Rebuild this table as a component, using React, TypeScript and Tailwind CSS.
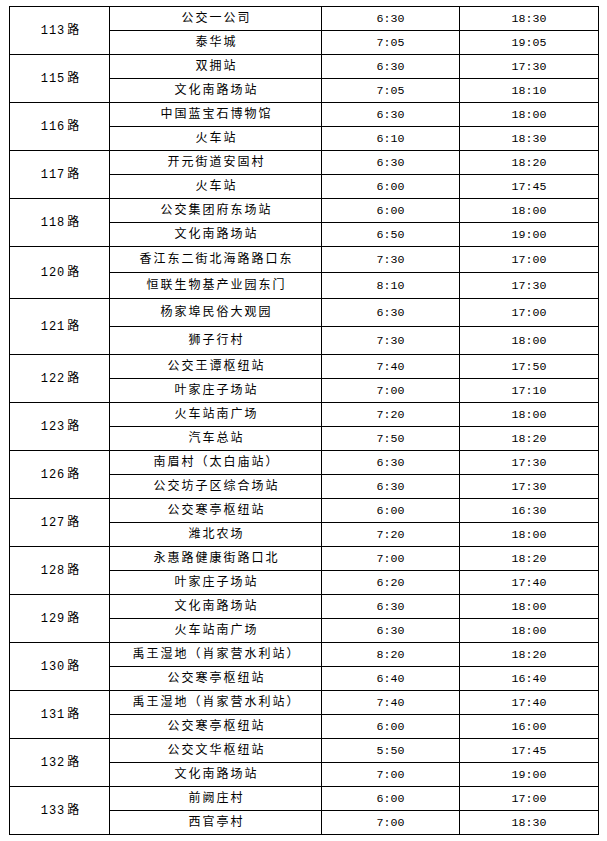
type Trip = { station: string; first: string; last: string };
type Route = { name: string; rowH: string; trips: [Trip, Trip] };

const routes: Route[] = [
	{ name: "113路", rowH: "grid-rows-[24px_24px]", trips: [{ station: "公交一公司", first: "6:30", last: "18:30" }, { station: "泰华城", first: "7:05", last: "19:05" }] },
	{ name: "115路", rowH: "grid-rows-[24px_24px]", trips: [{ station: "双拥站", first: "6:30", last: "17:30" }, { station: "文化南路场站", first: "7:05", last: "18:10" }] },
	{ name: "116路", rowH: "grid-rows-[24px_24px]", trips: [{ station: "中国蓝宝石博物馆", first: "6:30", last: "18:00" }, { station: "火车站", first: "6:10", last: "18:30" }] },
	{ name: "117路", rowH: "grid-rows-[24px_24px]", trips: [{ station: "开元街道安固村", first: "6:30", last: "18:20" }, { station: "火车站", first: "6:00", last: "17:45" }] },
	{ name: "118路", rowH: "grid-rows-[24px_24px]", trips: [{ station: "公交集团府东场站", first: "6:00", last: "18:00" }, { station: "文化南路场站", first: "6:50", last: "19:00" }] },
	{ name: "120路", rowH: "grid-rows-[26px_26px]", trips: [{ station: "香江东二街北海路路口东", first: "7:30", last: "17:00" }, { station: "恒联生物基产业园东门", first: "8:10", last: "17:30" }] },
	{ name: "121路", rowH: "grid-rows-[28px_28px]", trips: [{ station: "杨家埠民俗大观园", first: "6:30", last: "17:00" }, { station: "狮子行村", first: "7:30", last: "18:00" }] },
	{ name: "122路", rowH: "grid-rows-[24px_24px]", trips: [{ station: "公交王谭枢纽站", first: "7:40", last: "17:50" }, { station: "叶家庄子场站", first: "7:00", last: "17:10" }] },
	{ name: "123路", rowH: "grid-rows-[24px_24px]", trips: [{ station: "火车站南广场", first: "7:20", last: "18:00" }, { station: "汽车总站", first: "7:50", last: "18:20" }] },
	{ name: "126路", rowH: "grid-rows-[24px_24px]", trips: [{ station: "南眉村（太白庙站）", first: "6:30", last: "17:30" }, { station: "公交坊子区综合场站", first: "6:30", last: "17:30" }] },
	{ name: "127路", rowH: "grid-rows-[24px_24px]", trips: [{ station: "公交寒亭枢纽站", first: "6:00", last: "16:30" }, { station: "潍北农场", first: "7:20", last: "18:00" }] },
	{ name: "128路", rowH: "grid-rows-[24px_24px]", trips: [{ station: "永惠路健康街路口北", first: "7:00", last: "18:20" }, { station: "叶家庄子场站", first: "6:20", last: "17:40" }] },
	{ name: "129路", rowH: "grid-rows-[24px_24px]", trips: [{ station: "文化南路场站", first: "6:30", last: "18:00" }, { station: "火车站南广场", first: "6:30", last: "18:00" }] },
	{ name: "130路", rowH: "grid-rows-[24px_24px]", trips: [{ station: "禹王湿地（肖家营水利站）", first: "8:20", last: "18:20" }, { station: "公交寒亭枢纽站", first: "6:40", last: "16:40" }] },
	{ name: "131路", rowH: "grid-rows-[24px_24px]", trips: [{ station: "禹王湿地（肖家营水利站）", first: "7:40", last: "17:40" }, { station: "公交寒亭枢纽站", first: "6:00", last: "16:00" }] },
	{ name: "132路", rowH: "grid-rows-[24px_24px]", trips: [{ station: "公交文华枢纽站", first: "5:50", last: "17:45" }, { station: "文化南路场站", first: "7:00", last: "19:00" }] },
	{ name: "133路", rowH: "grid-rows-[24px_24px]", trips: [{ station: "前阙庄村", first: "6:00", last: "17:00" }, { station: "西官亭村", first: "7:00", last: "18:30" }] },
];

const cell = "flex items-center justify-center border-r border-b border-black";
const timeCell = `${cell} font-['Liberation_Mono',monospace] text-[11.6px]`;

function RouteGroup({ route }: { route: Route }) {
	return (
		<div className={`grid grid-cols-[100px_212px_138px_139px] ${route.rowH}`}>
			{/* route number spans both directions */}
			<div className={`${cell} row-span-2 text-[12px] tracking-[1px] pl-[2px]`}>
				{route.name.replace("路", "")}
				<span className="ml-[2px]">路</span>
			</div>
			{route.trips.map((t, i) => (
				<div key={i} className="contents">
					<div className={`${cell} text-[12px] tracking-[2px] pl-[2px]`}>{t.station}</div>
					<div className={timeCell}>{t.first}</div>
					<div className={timeCell}>{t.last}</div>
				</div>
			))}
		</div>
	);
}

export default function App() {
	return (
		<div className="min-h-[841px] w-[607px] bg-white pt-[6px] pl-[9px] text-black font-['Liberation_Mono','Noto_Sans_CJK_SC',monospace] leading-none">
			<div className="w-[590px] border-l border-t border-black">
				{routes.map((r) => (
					<RouteGroup key={r.name} route={r} />
				))}
			</div>
		</div>
	);
}
